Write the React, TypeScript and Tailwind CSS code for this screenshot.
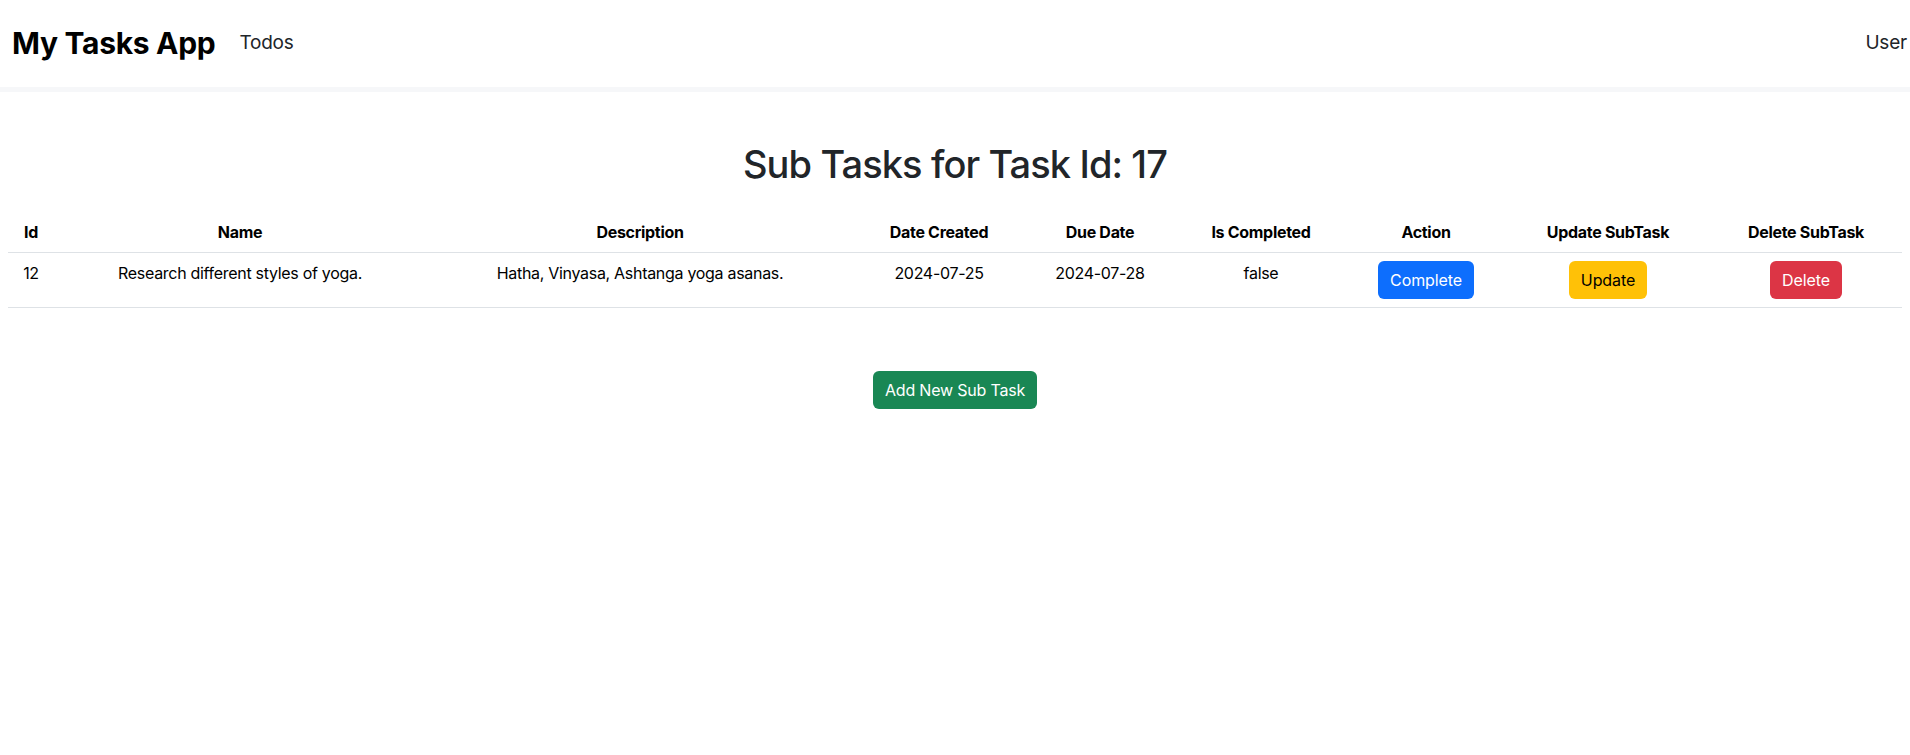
import React from 'react';

const cols = [
  { label: 'Id', w: 'w-[46px]' },
  { label: 'Name', w: 'w-[372px]' },
  { label: 'Description', w: 'w-[428px]' },
  { label: 'Date Created', w: 'w-[170px]' },
  { label: 'Due Date', w: 'w-[152px]' },
  { label: 'Is Completed', w: 'w-[170px]' },
  { label: 'Action', w: 'w-[160px]' },
  { label: 'Update SubTask', w: 'w-[204px]' },
  { label: 'Delete SubTask', w: 'w-[192px]' },
];

export default function App() {
  return (
    <div className="min-h-screen bg-white text-[#212529] font-['Inter','Liberation_Sans',sans-serif]">
      <nav className="h-[87px] flex items-center pl-3 pr-[3px] border-b-[5px] border-[#f6f7f9] box-content">
        <a className="text-[30px] font-bold text-black tracking-[-0.3px] mr-4">My Tasks App</a>
        <a className="text-[19px] text-[#212529] px-2 tracking-[-0.2px]">Todos</a>
        <a className="ml-auto text-[19px] text-[#212529] tracking-[-0.2px]">User</a>
      </nav>

      <div className="px-2">
        <h2 className="mt-[48px] mb-[24px] text-center text-[38px] leading-[48px] font-medium tracking-[-0.9px]">
          Sub Tasks for Task Id: 17
        </h2>

        <table className="w-full table-fixed border-collapse text-center text-[16px] leading-6 tracking-[-0.3px]">
          <thead>
            <tr className="border-b border-[#dee2e6]">
              {cols.map((c) => (
                <th key={c.label} className={`${c.w} p-2 font-bold text-black`}>
                  {c.label}
                </th>
              ))}
            </tr>
          </thead>
          <tbody>
            <tr className="border-b border-[#dee2e6] align-top text-black">
              <td className="p-2">12</td>
              <td className="p-2">Research different styles of yoga.</td>
              <td className="p-2">Hatha, Vinyasa, Ashtanga yoga asanas.</td>
              <td className="p-2">2024-07-25</td>
              <td className="p-2">2024-07-28</td>
              <td className="p-2">false</td>
              <td className="p-2">
                <button className="bg-[#0d6efd] text-white rounded-md px-3 py-[7px] leading-6 tracking-[-0.1px]">Complete</button>
              </td>
              <td className="p-2">
                <button className="bg-[#ffc107] text-black rounded-md px-3 py-[7px] leading-6 tracking-[-0.1px]">Update</button>
              </td>
              <td className="p-2">
                <button className="bg-[#dc3545] text-white rounded-md px-3 py-[7px] leading-6 tracking-[-0.1px]">Delete</button>
              </td>
            </tr>
          </tbody>
        </table>

        <div className="flex justify-center mt-[63px]">
          <button className="bg-[#198754] text-white rounded-md px-3 py-[7px] leading-6 text-[16px] tracking-[-0.2px]">
            Add New Sub Task
          </button>
        </div>
      </div>
    </div>
  );
}
